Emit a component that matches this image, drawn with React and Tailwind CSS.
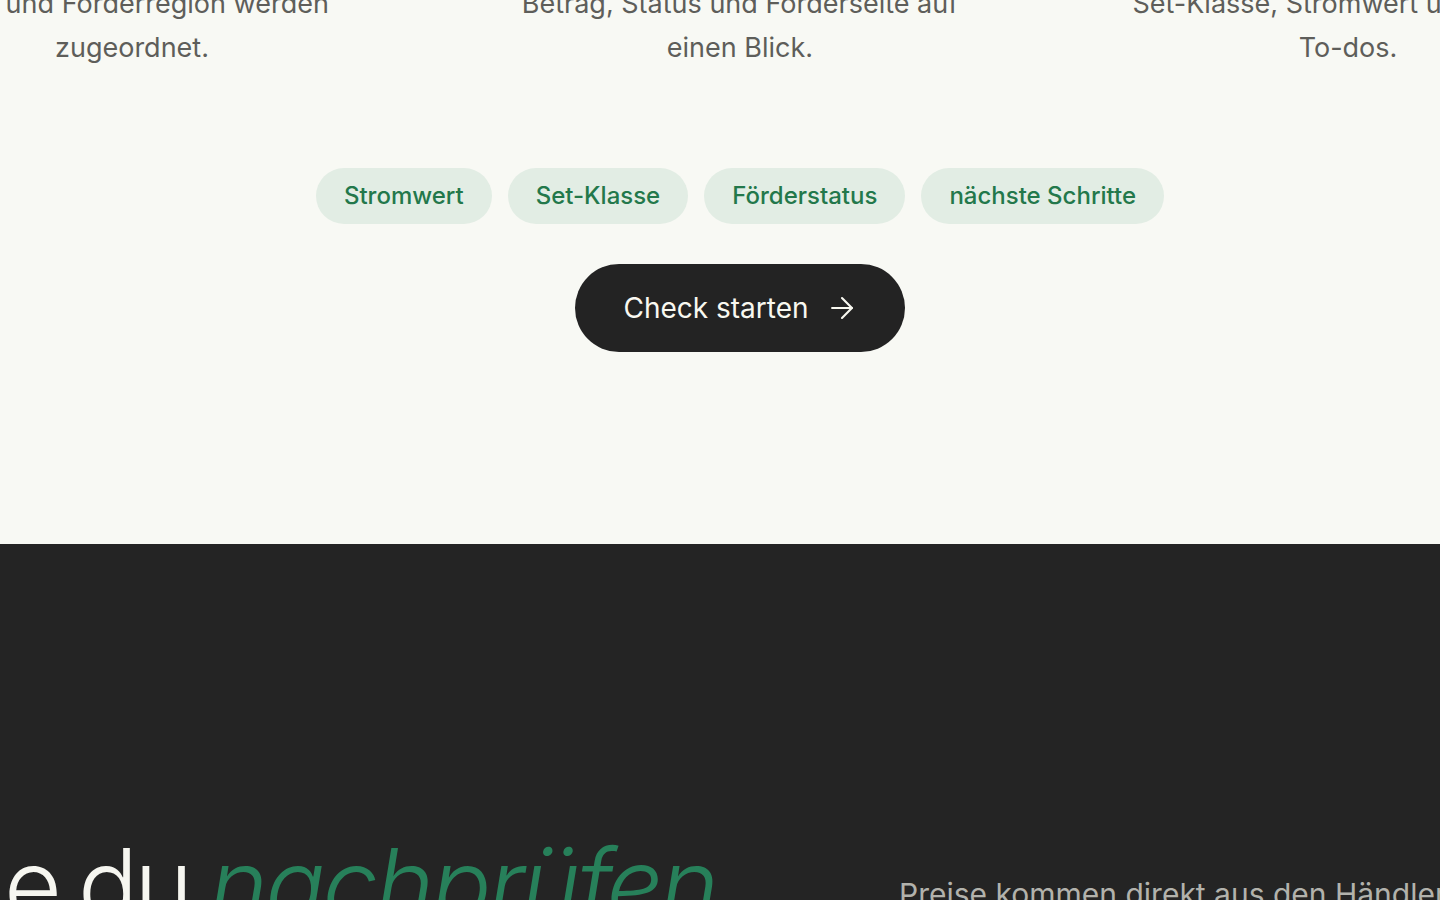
import { ArrowRight } from 'lucide-react'

const columns = [
  ['Land und Förderregion werden', 'zugeordnet.'],
  ['Betrag, Status und Förderseite auf', 'einen Blick.'],
  ['Set-Klasse, Stromwert und offene', 'To-dos.'],
]

const chips = ['Stromwert', 'Set-Klasse', 'Förderstatus', 'nächste Schritte']

const App = () => {
  return (
    <div className="w-full overflow-hidden font-['Inter',sans-serif]">
      <div className="w-[1480px]">
        {/* Summary + CTA */}
        <section className="bg-[#f8f9f4] pb-[192px]">
          <div className="flex justify-center">
            <div className="-mt-[18px] grid w-[1696px] shrink-0 grid-cols-3 gap-[128px]">
              {columns.map((lines, i) => (
                <p key={i} className="text-center text-[27px] leading-[44px] text-[#5e5e5a]">
                  {lines[0]}
                  <br />
                  {lines[1]}
                </p>
              ))}
            </div>
          </div>

          <div className="mt-[98px] flex justify-center gap-4">
            {chips.map(chip => (
              <span
                key={chip}
                className="flex h-[56px] items-center rounded-full bg-[#e2ede4] px-[28px] text-[24px] font-medium text-[#23784b]"
              >
                {chip}
              </span>
            ))}
          </div>

          <div className="mt-10 flex justify-center">
            <button className="flex h-[88px] items-center gap-4 rounded-full bg-[#232323] pl-12 pr-[46px] text-[28px] text-[#f8f8f0]">
              Check starten
              <ArrowRight size={34} strokeWidth={1.5} />
            </button>
          </div>
        </section>

        {/* Prices section */}
        <section className="bg-[#242424] pb-[120px] pt-[291px]">
          <div className="flex items-start pl-[4px]">
            <h2 className="w-[895px] shrink-0 text-[100px] font-light leading-none tracking-[-0.04em] text-[#f6f6f0] [word-spacing:-4px]">
              e du <em className="tracking-[-0.03em] text-[#27805a]">nachprüfen</em>
            </h2>
            <p className="mt-[35px] w-[820px] shrink-0 text-[30px] leading-[1.6] text-[#b2b2ac]">
              Preise kommen direkt aus den Händlershops und werden regelmäßig aktualisiert.
            </p>
          </div>
        </section>
      </div>
    </div>
  )
}

export default App
